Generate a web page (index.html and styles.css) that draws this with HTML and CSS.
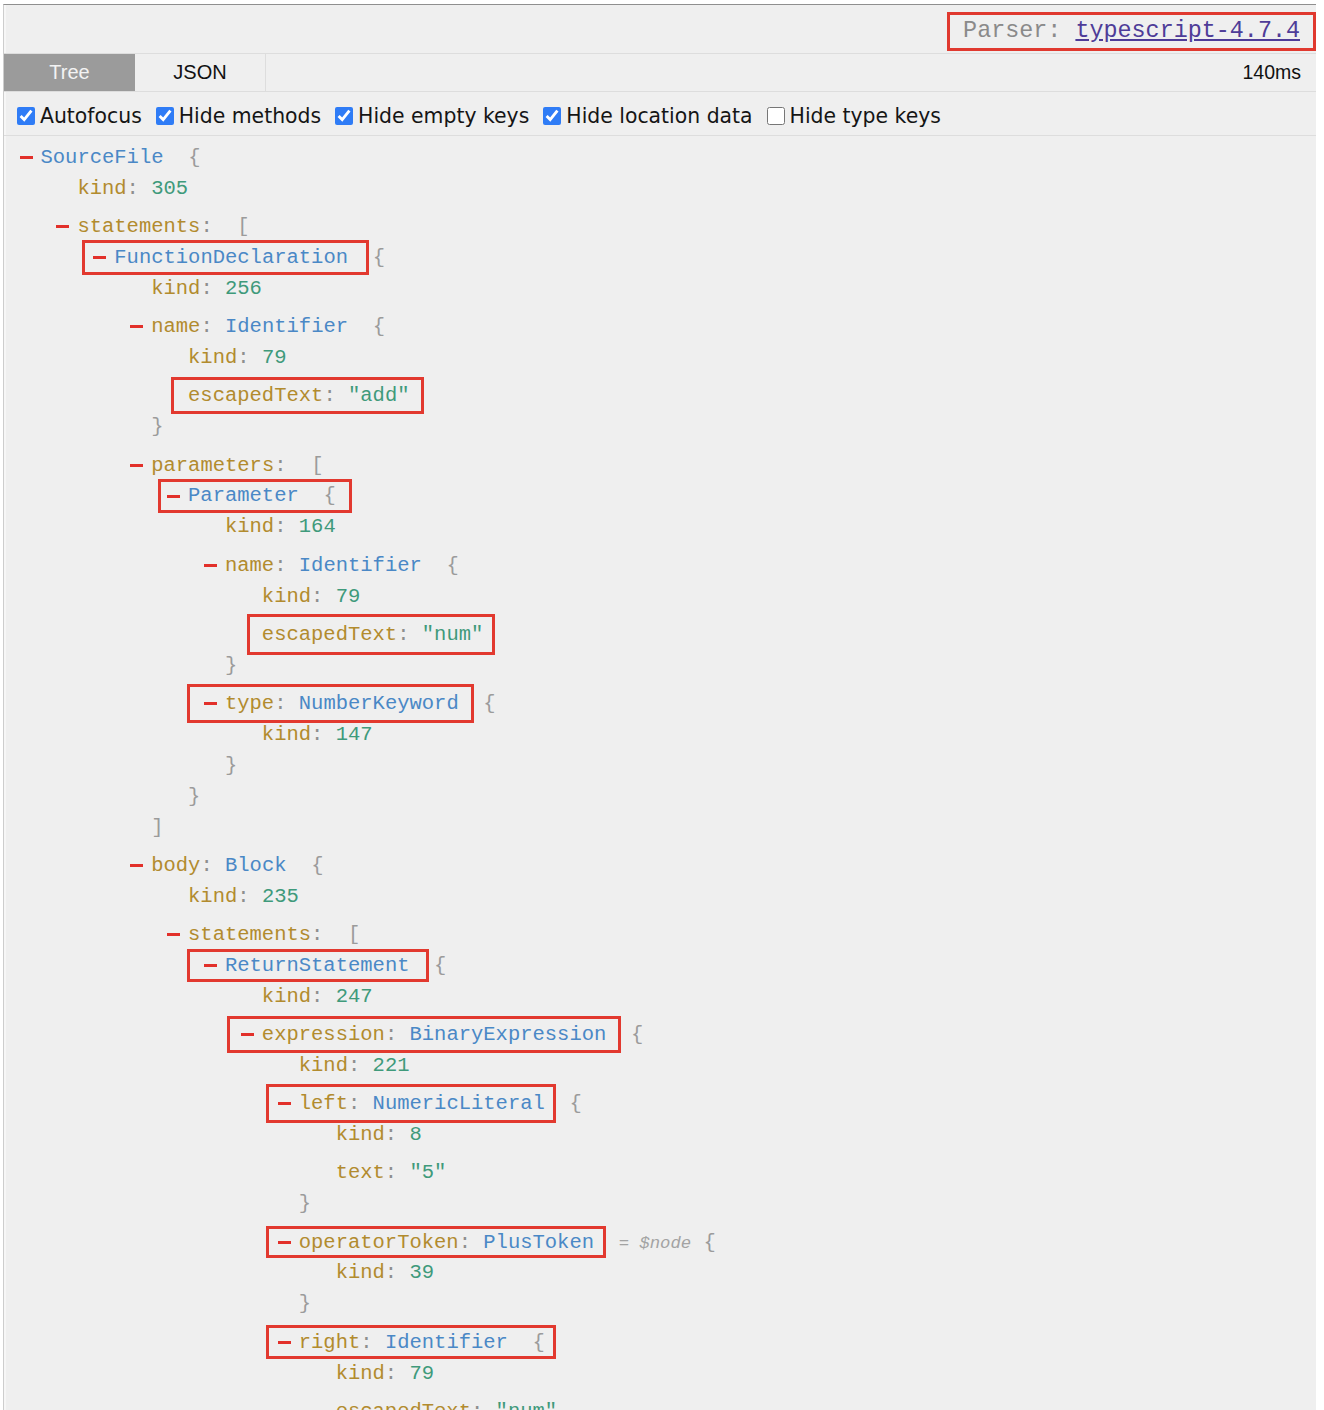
FILE: index.html
```html
<!DOCTYPE html>
<html lang="en">
<head>
<meta charset="utf-8">
<title>AST Explorer</title>
<link rel="stylesheet" href="styles.css">
</head>
<body>
<div class="app">
  <header class="topbar">
    <span class="parser"><span class="parser-label">Parser: </span><a class="parser-link" href="#">typescript-4.7.4</a></span>
  </header>
  <div class="tabs">
    <span class="tab tab-active">Tree</span>
    <span class="tab tab-json">JSON</span>
    <span class="time">140ms</span>
  </div>
  <div class="options">
    <label class="opt"><input type="checkbox" checked>Autofocus</label>
    <label class="opt"><input type="checkbox" checked>Hide methods</label>
    <label class="opt"><input type="checkbox" checked>Hide empty keys</label>
    <label class="opt"><input type="checkbox" checked>Hide location data</label>
    <label class="opt"><input type="checkbox">Hide type keys</label>
  </div>
  <div class="tree">
    <ul>
      <li class="entry">
        <div class="line"><span class="tog"></span><span class="t">SourceFile</span>  <span class="p">{</span></div>
        <ul>
          <li class="entry"><div class="line"><span class="k">kind</span><span class="c">:</span> <span class="v">305</span></div></li>
          <li class="entry">
            <div class="line"><span class="tog"></span><span class="k">statements</span><span class="c">:</span>  <span class="p">[</span></div>
            <ul>
              <li class="entry">
                <div class="line"><span class="hl hl-fd"><span class="tog"></span><span class="t">FunctionDeclaration</span></span>  <span class="p">{</span></div>
                <ul>
                  <li class="entry"><div class="line"><span class="k">kind</span><span class="c">:</span> <span class="v">256</span></div></li>
                  <li class="entry">
                    <div class="line"><span class="tog"></span><span class="k">name</span><span class="c">:</span> <span class="t">Identifier</span>  <span class="p">{</span></div>
                    <ul>
                      <li class="entry"><div class="line"><span class="k">kind</span><span class="c">:</span> <span class="v">79</span></div></li>
                      <li class="entry"><div class="line"><span class="hl hl-add"><span class="k">escapedText</span><span class="c">:</span> <span class="v">"add"</span></span></div></li>
                    </ul>
                    <div class="line"><span class="p">}</span></div>
                  </li>
                  <li class="entry">
                    <div class="line"><span class="tog"></span><span class="k">parameters</span><span class="c">:</span>  <span class="p">[</span></div>
                    <ul>
                      <li class="entry">
                        <div class="line"><span class="hl hl-param"><span class="tog"></span><span class="t">Parameter</span>  <span class="p">{</span></span></div>
                        <ul>
                          <li class="entry"><div class="line"><span class="k">kind</span><span class="c">:</span> <span class="v">164</span></div></li>
                          <li class="entry">
                            <div class="line"><span class="tog"></span><span class="k">name</span><span class="c">:</span> <span class="t">Identifier</span>  <span class="p">{</span></div>
                            <ul>
                              <li class="entry"><div class="line"><span class="k">kind</span><span class="c">:</span> <span class="v">79</span></div></li>
                              <li class="entry"><div class="line"><span class="hl hl-num"><span class="k">escapedText</span><span class="c">:</span> <span class="v">"num"</span></span></div></li>
                            </ul>
                            <div class="line"><span class="p">}</span></div>
                          </li>
                          <li class="entry">
                            <div class="line"><span class="hl hl-type"><span class="tog"></span><span class="k">type</span><span class="c">:</span> <span class="t">NumberKeyword</span></span>  <span class="p">{</span></div>
                            <ul>
                              <li class="entry"><div class="line"><span class="k">kind</span><span class="c">:</span> <span class="v">147</span></div></li>
                            </ul>
                            <div class="line"><span class="p">}</span></div>
                          </li>
                        </ul>
                        <div class="line"><span class="p">}</span></div>
                      </li>
                    </ul>
                    <div class="line"><span class="p">]</span></div>
                  </li>
                  <li class="entry">
                    <div class="line"><span class="tog"></span><span class="k">body</span><span class="c">:</span> <span class="t">Block</span>  <span class="p">{</span></div>
                    <ul>
                      <li class="entry"><div class="line"><span class="k">kind</span><span class="c">:</span> <span class="v">235</span></div></li>
                      <li class="entry">
                        <div class="line"><span class="tog"></span><span class="k">statements</span><span class="c">:</span>  <span class="p">[</span></div>
                        <ul>
                          <li class="entry">
                            <div class="line"><span class="hl hl-ret"><span class="tog"></span><span class="t">ReturnStatement</span></span>  <span class="p">{</span></div>
                            <ul>
                              <li class="entry"><div class="line"><span class="k">kind</span><span class="c">:</span> <span class="v">247</span></div></li>
                              <li class="entry">
                                <div class="line"><span class="hl hl-expr"><span class="tog"></span><span class="k">expression</span><span class="c">:</span> <span class="t">BinaryExpression</span></span>  <span class="p">{</span></div>
                                <ul>
                                  <li class="entry"><div class="line"><span class="k">kind</span><span class="c">:</span> <span class="v">221</span></div></li>
                                  <li class="entry">
                                    <div class="line"><span class="hl hl-left"><span class="tog"></span><span class="k">left</span><span class="c">:</span> <span class="t">NumericLiteral</span></span>  <span class="p">{</span></div>
                                    <ul>
                                      <li class="entry"><div class="line"><span class="k">kind</span><span class="c">:</span> <span class="v">8</span></div></li>
                                      <li class="entry"><div class="line"><span class="k">text</span><span class="c">:</span> <span class="v">"5"</span></div></li>
                                    </ul>
                                    <div class="line"><span class="p">}</span></div>
                                  </li>
                                  <li class="entry">
                                    <div class="line"><span class="hl hl-op"><span class="tog"></span><span class="k">operatorToken</span><span class="c">:</span> <span class="t">PlusToken</span></span>  <span class="meta">= $node</span> <span class="p">{</span></div>
                                    <ul>
                                      <li class="entry"><div class="line"><span class="k">kind</span><span class="c">:</span> <span class="v">39</span></div></li>
                                    </ul>
                                    <div class="line"><span class="p">}</span></div>
                                  </li>
                                  <li class="entry">
                                    <div class="line"><span class="hl hl-right"><span class="tog"></span><span class="k">right</span><span class="c">:</span> <span class="t">Identifier</span>  <span class="p">{</span></span></div>
                                    <ul>
                                      <li class="entry"><div class="line"><span class="k">kind</span><span class="c">:</span> <span class="v">79</span></div></li>
                                      <li class="entry"><div class="line"><span class="k">escapedText</span><span class="c">:</span> <span class="v">"num"</span></div></li>
                                    </ul>
                                  </li>
                                </ul>
                              </li>
                            </ul>
                          </li>
                        </ul>
                      </li>
                    </ul>
                  </li>
                </ul>
              </li>
            </ul>
          </li>
        </ul>
      </li>
    </ul>
  </div>
</div>
</body>
</html>
```

FILE: styles.css
```css
* {
  box-sizing: border-box;
}

html,
body {
  margin: 0;
  padding: 0;
  background: #ffffff;
}

body {
  width: 1324px;
  height: 1410px;
  overflow: hidden;
}

.app {
  margin: 4px 0 0 3px;
  width: 1313px;
  height: 1406px;
  background: #efefef;
  border-top: 1px solid #8f8f8f;
  border-left: 1px solid #cdcdcd;
  box-shadow: inset 2px 0 0 #f6f6f6;
  overflow: hidden;
}

/* ---------- top bar ---------- */
.topbar {
  height: 49px;
  display: flex;
  justify-content: flex-end;
  align-items: flex-start;
  padding-top: 7px;
  border-bottom: 1px solid #dddddd;
}

.parser {
  font-family: "Liberation Mono", monospace;
  font-size: 23.4px;
  line-height: 33px;
  border: 3px solid #e0392f;
  padding: 0 13px;
  white-space: pre;
}

.parser-label {
  color: #8a8a8a;
}

.parser-link {
  color: #4e3c98;
  text-decoration: underline;
}

/* ---------- tabs ---------- */
.tabs {
  display: flex;
  height: 38px;
  border-bottom: 1px solid #dddddd;
  font-family: "Liberation Sans", Arial, sans-serif;
  font-size: 20px;
  color: #111111;
}

.tab {
  width: 131px;
  display: flex;
  align-items: center;
  justify-content: center;
}

.tab-active {
  background: #9b9b9b;
  color: #f3f3f3;
}

.tab-json {
  border-right: 1px solid #dddddd;
}

.time {
  margin-left: auto;
  padding-right: 15px;
  display: flex;
  align-items: center;
  font-size: 19.5px;
}

/* ---------- options ---------- */
.options {
  height: 44px;
  display: flex;
  align-items: center;
  gap: 14px;
  padding: 4px 0 0 13px;
  border-bottom: 1px solid #dddddd;
  font-family: "DejaVu Sans", sans-serif;
  font-size: 20.4px;
  color: #151515;
}

.opt {
  display: flex;
  align-items: center;
  gap: 5px;
}

.opt input {
  width: 18px;
  height: 18px;
  margin: 0;
  accent-color: #2f7cf6;
}

/* ---------- tree ---------- */
.tree {
  padding: 7px 0 0 36.5px;
  font-family: "Liberation Mono", monospace;
  font-size: 20.5px;
}

.tree ul {
  list-style: none;
  margin: 0;
  padding: 0;
}

.tree .entry ul {
  padding-left: 36.9px;
}

.entry + .entry {
  margin-top: 7.4px;
}

.line {
  height: 30.9px;
  line-height: 30.9px;
  white-space: pre;
}

.tog {
  display: inline-block;
  width: 13px;
  height: 3px;
  background: #e2302a;
  margin: 0 8px 0 -21px;
  vertical-align: middle;
}

.k {
  color: #b28b2e;
}

.c {
  color: #8e8e8e;
}

.v {
  color: #3f9a7b;
}

.t {
  color: #4a88c6;
}

.p {
  color: #9b9b9b;
}

.meta {
  color: #a3a3a3;
  font-style: italic;
  font-size: 17.3px;
}

/* annotation boxes */
.hl {
  border: 3px solid #e2392f;
  padding: var(--v) calc(var(--r) - 3px) var(--v) calc(var(--l) - 3px);
  margin: 0 calc(0px - var(--r)) 0 calc(0px - var(--l));
}

.hl-fd { --l: 32px; --r: 21px; --v: 3px; }
.hl-add { --l: 17px; --r: 14.5px; --v: 4px; }
.hl-param { --l: 30px; --r: 16px; --v: 2.4px; }
.hl-num { --l: 15px; --r: 11.7px; --v: 6px; }
.hl-type { --l: 38px; --r: 15.3px; --v: 5px; }
.hl-ret { --l: 38px; --r: 19.5px; --v: 2px; }
.hl-expr { --l: 35px; --r: 14.7px; --v: 4.2px; }
.hl-left { --l: 32.8px; --r: 11.2px; --v: 5.2px; }
.hl-op { --l: 32.8px; --r: 12px; --v: 1.5px; }
.hl-right { --l: 32.8px; --r: 11.2px; --v: 2.8px; }
```
